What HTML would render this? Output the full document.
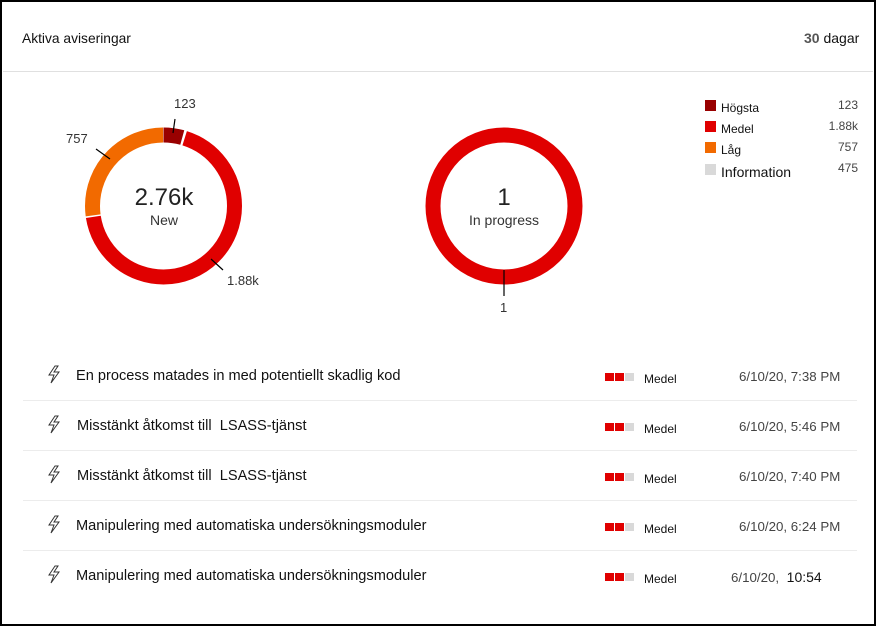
<!DOCTYPE html>
<html><head><meta charset="utf-8"><style>
body{margin:0;width:876px;height:626px;background:#fff;font-family:"Liberation Sans",Arial,sans-serif;overflow:hidden;position:relative}
.frame{position:absolute;left:0;top:0;width:872px;height:622px;border:2px solid #000;border-right-width:2px}
.t{position:absolute;white-space:nowrap}
.sep{position:absolute;left:23px;width:834px;height:1px;background:#ececec}
.sev{position:absolute;width:30px;height:8px;line-height:0}
.sev i{display:block;float:left;width:9px;height:8px;margin-right:1px;background:#e00000}
.sev i.g{background:#d9d9d9}
.r{font-size:14.6px;color:#111}
</style></head><body>
<div class="frame"></div>
<div class="t" style="left:22px;top:31px;font-size:13.8px;color:#111">Aktiva aviseringar</div>
<div class="t" style="left:804px;top:30px;font-size:14px;color:#111"><span style="color:#555;font-weight:bold">30</span> dagar</div>
<div style="position:absolute;left:3px;top:71px;width:870px;height:1px;background:#e0e0e0"></div>

<svg style="position:absolute;left:0;top:0" width="876" height="340">
<g transform="translate(163.5 206) rotate(-90)">
<circle r="71" fill="none" stroke="#e00000" stroke-width="15" stroke-dasharray="302 500" stroke-dashoffset="-21.5"/>
<circle r="71" fill="none" stroke="#f26a00" stroke-width="15" stroke-dasharray="120.5 500" stroke-dashoffset="-325"/>
<circle r="71" fill="none" stroke="#990000" stroke-width="15" stroke-dasharray="19 500" stroke-dashoffset="0"/>
</g>
<line x1="175" y1="119" x2="173" y2="133" stroke="#000" stroke-width="1.2"/>
<line x1="96" y1="149" x2="110" y2="159" stroke="#000" stroke-width="1.2"/>
<line x1="211" y1="259" x2="223" y2="270" stroke="#000" stroke-width="1.2"/>
<circle cx="504" cy="206" r="71" fill="none" stroke="#e00000" stroke-width="15"/>
<line x1="504" y1="270" x2="504" y2="296" stroke="#000" stroke-width="1.2"/>
</svg>
<div class="t" style="left:174px;top:96px;font-size:13px;color:#333">123</div>
<div class="t" style="left:66px;top:131px;font-size:13px;color:#333">757</div>
<div class="t" style="left:227px;top:273px;font-size:13px;color:#333">1.88k</div>
<div class="t" style="left:104px;top:184px;width:120px;text-align:center;font-size:24px;color:#222">2.76k</div>
<div class="t" style="left:104px;top:212px;width:120px;text-align:center;font-size:14px;color:#333">New</div>
<div class="t" style="left:444px;top:184px;width:120px;text-align:center;font-size:24px;color:#222">1</div>
<div class="t" style="left:444px;top:212px;width:120px;text-align:center;font-size:14px;color:#333">In progress</div>
<div class="t" style="left:500px;top:300px;font-size:13px;color:#333">1</div>

<div style="position:absolute;left:705px;top:100px;width:11px;height:11px;background:#990000"></div>
<div style="position:absolute;left:705px;top:121px;width:11px;height:11px;background:#e00000"></div>
<div style="position:absolute;left:705px;top:142px;width:11px;height:11px;background:#f26a00"></div>
<div style="position:absolute;left:705px;top:164px;width:11px;height:11px;background:#d9d9d9"></div>
<div class="t" style="left:721px;top:101px;font-size:12px;color:#111">Högsta</div>
<div class="t" style="left:721px;top:122px;font-size:12px;color:#111">Medel</div>
<div class="t" style="left:721px;top:143px;font-size:12px;color:#111">Låg</div>
<div class="t" style="left:721px;top:164px;font-size:14px;color:#111">Information</div>
<div class="t" style="left:790px;top:98px;width:68px;text-align:right;font-size:12px;color:#444">123</div>
<div class="t" style="left:790px;top:119px;width:68px;text-align:right;font-size:12px;color:#444">1.88k</div>
<div class="t" style="left:790px;top:140px;width:68px;text-align:right;font-size:12px;color:#444">757</div>
<div class="t" style="left:790px;top:161px;width:68px;text-align:right;font-size:12px;color:#444">475</div>

<svg style="position:absolute;left:0;top:0" width="876" height="626" fill="none" stroke="#333" stroke-width="1">
<g id="b"><path d="M55 366 L49 375 L54 375 L51 383 L59 372 L54 372 L58 366 Z"/></g>
<use href="#b" y="50"/><use href="#b" y="100"/><use href="#b" y="150"/><use href="#b" y="200"/>
</svg>

<div class="t r" style="left:76px;top:368px">En process matades in med potentiellt skadlig kod</div>
<div class="t r" style="left:77px;top:418px">Misstänkt åtkomst till &nbsp;LSASS-tjänst</div>
<div class="t r" style="left:77px;top:468px">Misstänkt åtkomst till &nbsp;LSASS-tjänst</div>
<div class="t r" style="left:76px;top:518px">Manipulering med automatiska undersökningsmoduler</div>
<div class="t r" style="left:76px;top:568px">Manipulering med automatiska undersökningsmoduler</div>

<div class="sev" style="left:605px;top:373px"><i></i><i></i><i class="g"></i></div>
<div class="sev" style="left:605px;top:423px"><i></i><i></i><i class="g"></i></div>
<div class="sev" style="left:605px;top:423px;top:473px"><i></i><i></i><i class="g"></i></div>
<div class="sev" style="left:605px;top:523px"><i></i><i></i><i class="g"></i></div>
<div class="sev" style="left:605px;top:573px"><i></i><i></i><i class="g"></i></div>
<div class="t" style="left:644px;top:372px;font-size:12px;color:#111">Medel</div>
<div class="t" style="left:644px;top:422px;font-size:12px;color:#111">Medel</div>
<div class="t" style="left:644px;top:472px;font-size:12px;color:#111">Medel</div>
<div class="t" style="left:644px;top:522px;font-size:12px;color:#111">Medel</div>
<div class="t" style="left:644px;top:572px;font-size:12px;color:#111">Medel</div>
<div class="t" style="left:739px;top:369px;font-size:13.3px;color:#444">6/10/20, 7:38 PM</div>
<div class="t" style="left:739px;top:419px;font-size:13.3px;color:#444">6/10/20, 5:46 PM</div>
<div class="t" style="left:739px;top:469px;font-size:13.3px;color:#444">6/10/20, 7:40 PM</div>
<div class="t" style="left:739px;top:519px;font-size:13.3px;color:#444">6/10/20, 6:24 PM</div>
<div class="t" style="left:731px;top:569px;font-size:13.3px;color:#444">6/10/20, <span style="color:#111;font-size:14px">&nbsp;10:54</span></div>

<div class="sep" style="top:400px"></div>
<div class="sep" style="top:450px"></div>
<div class="sep" style="top:500px"></div>
<div class="sep" style="top:550px"></div>
</body></html>
